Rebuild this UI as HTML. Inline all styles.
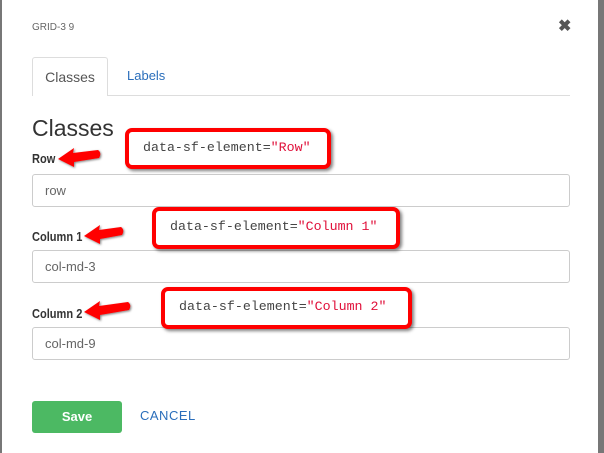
<!DOCTYPE html>
<html><head><style>
body{margin:0;width:604px;height:453px;background:#777;overflow:hidden;font-family:"Liberation Sans",sans-serif;position:relative}
.m{position:absolute;left:2px;top:0;width:596px;height:453px;background:#fff}
.a{position:absolute}
.lbl{position:absolute;left:32px;font-size:13px;font-weight:bold;color:#333;transform:scaleX(.85);transform-origin:left}
.inp{position:absolute;left:32px;width:536px;height:31px;border:1px solid #ccc;border-radius:3px;font-size:13px;color:#666;line-height:31px;text-indent:12px;box-sizing:content-box}
.call{position:absolute;border:4px solid #f00;border-radius:7px;background:#fff;box-shadow:2px 2px 3px rgba(0,0,0,.5);font-family:"Liberation Mono",monospace;font-size:13.3px;color:#444;box-sizing:border-box;line-height:32px;padding-left:14px}
.call b{font-weight:normal;color:#e0103a}
</style></head><body>
<div class="m"></div>
<div class="a" style="left:32px;top:22px;font-size:10px;color:#666">GRID-3 9</div>
<div class="a" style="left:558px;top:16px;font-size:16px;font-weight:bold;color:#555">✖</div>
<div class="a" style="left:32px;top:95px;width:538px;height:1px;background:#ddd"></div>
<div class="a" style="left:32px;top:57px;width:76px;height:39px;border:1px solid #ddd;border-bottom:none;border-radius:3px 3px 0 0;background:#fff;box-sizing:border-box;font-size:14px;color:#555;text-align:center;line-height:38px">Classes</div>
<div class="a" style="left:127px;top:68px;font-size:13px;color:#2a6ebb">Labels</div>
<div class="a" style="left:32px;top:115px;font-size:23px;color:#333">Classes</div>
<div class="lbl" style="top:151px">Row</div>
<div class="inp" style="top:174px">row</div>
<div class="lbl" style="top:229px">Column 1</div>
<div class="inp" style="top:250px">col-md-3</div>
<div class="lbl" style="top:306px">Column 2</div>
<div class="inp" style="top:327px">col-md-9</div>
<div class="a" style="left:32px;top:401px;width:90px;height:32px;background:#4cb963;border-radius:3px;color:#fff;font-weight:bold;font-size:13px;text-align:center;line-height:32px">Save</div>
<div class="a" style="left:140px;top:408px;font-size:13px;color:#2a6ebb;letter-spacing:.5px">CANCEL</div>
<div class="call" style="left:125px;top:128px;width:206px;height:41px">data-sf-element=<b>"Row"</b></div>
<div class="call" style="left:152px;top:207px;width:248px;height:42px">data-sf-element=<b>"Column 1"</b></div>
<div class="call" style="left:161px;top:287px;width:251px;height:42px">data-sf-element=<b>"Column 2"</b></div>
<svg class="a" style="left:0;top:0" width="604" height="453">
<defs><filter id="s"><feDropShadow dx="1" dy="1" stdDeviation="1" flood-opacity=".5"/></filter></defs>
<g fill="#f00" filter="url(#s)">
<path d="M58 159 L74 148 L73 153 L98 150 Q102 153 99 158 L74 162 L74 167 Z"/>
<path d="M84 236 L100 225 L99 230 L121 227 Q125 230 122 235 L100 239 L100 244 Z"/>
<path d="M84 312 L100 301 L99 306 L128 302 Q132 305 129 310 L100 315 L100 320 Z"/>
</g></svg>
</body></html>
